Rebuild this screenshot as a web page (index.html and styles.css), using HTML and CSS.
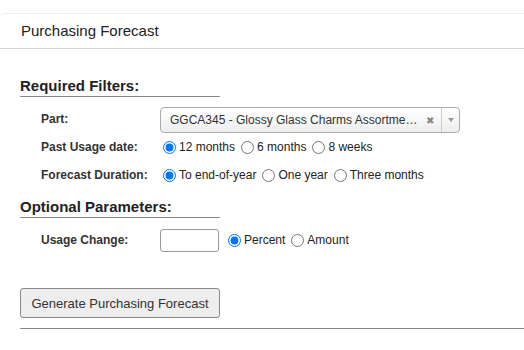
FILE: index.html
```html
<!DOCTYPE html>
<html lang="en">
<head>
    <meta charset="UTF-8">
    <meta name="viewport" content="width=device-width, initial-scale=1.0">
    <title>Purchasing Forecast</title>
    <link rel="stylesheet" href="styles.css">
</head>
<body>

    <div class="panel-head">Purchasing Forecast</div>

    <div class="panel-body">
        <h2 class="section-title">Required Filters:</h2>

        <div class="form-grid">
            <label class="field-label">Part:</label>
            <div class="field select-field">
                <div class="select-box">
                    <span class="select-text">GGCA345 - Glossy Glass Charms Assortme…</span>
                    <span class="select-clear">&#x2716;</span>
                    <span class="select-arrow"></span>
                </div>
            </div>

            <label class="field-label">Past Usage date:</label>
            <div class="field radios">
                <label><input type="radio" name="usage" checked>12 months</label>
                <label><input type="radio" name="usage">6 months</label>
                <label><input type="radio" name="usage">8 weeks</label>
            </div>

            <label class="field-label">Forecast Duration:</label>
            <div class="field radios">
                <label><input type="radio" name="duration" checked>To end-of-year</label>
                <label><input type="radio" name="duration">One year</label>
                <label><input type="radio" name="duration">Three months</label>
            </div>
        </div>

        <h2 class="section-title optional">Optional Parameters:</h2>

        <div class="form-grid">
            <label class="field-label">Usage Change:</label>
            <div class="field radios">
                <input type="text" class="small-input">
                <label><input type="radio" name="change" checked>Percent</label>
                <label><input type="radio" name="change">Amount</label>
            </div>
        </div>

        <button class="btn">Generate Purchasing Forecast</button>

        <hr class="divider">
    </div>

</body>
</html>
```

FILE: styles.css
```css
body {
    font-family: "Liberation Sans", Arial, sans-serif;
    margin: 0;
    background-color: #fff;
    color: #222;
}
.panel-head {
    margin-top: 13px;
    border-top: 1px solid #eee;
    border-bottom: 1px solid #d3d6db;
    border-top-left-radius: 4px;
    padding: 0 21px;
    height: 34px;
    line-height: 34px;
    font-size: 15px;
    color: #222;
}
.panel-body {
    padding-left: 20px;
}
.section-title {
    width: 200px;
    margin: 28px 0 0 0;
    padding-bottom: 1px;
    border-bottom: 1px solid #888;
    font-size: 15px;
    line-height: 18px;
    color: #222;
}
.section-title.optional {
    margin-top: 11px;
}
.form-grid {
    display: grid;
    grid-template-columns: 140px auto;
    row-gap: 4px;
    margin-top: 10px;
    align-items: start;
}
.field-label {
    padding-left: 21px;
    padding-top: 5px;
    font-size: 12px;
    font-weight: bold;
    color: #333;
}
.select-field {
    margin-bottom: -2px;
}
.select-box {
    position: relative;
    width: 298px;
    height: 24px;
    border: 1px solid #aaa;
    border-radius: 4px;
    background: linear-gradient(#fff, #eee);
    font-size: 12px;
    line-height: 24px;
}
.select-text {
    padding-left: 9px;
    color: #333;
}
.select-clear {
    position: absolute;
    right: 25px;
    top: 1px;
    font-size: 10px;
    color: #888;
}
.select-arrow {
    position: absolute;
    right: 0;
    top: 0;
    width: 17px;
    height: 24px;
    border-left: 1px solid #ccc;
}
.select-arrow::after {
    content: "";
    position: absolute;
    left: 6px;
    top: 10px;
    border-left: 3px solid transparent;
    border-right: 3px solid transparent;
    border-top: 4px solid #999;
}
.radios {
    display: flex;
    align-items: center;
    font-size: 12px;
    height: 24px;
    color: #222;
}
.radios label {
    display: flex;
    align-items: center;
    margin-right: 3px;
}
.radios input[type="radio"] {
    margin: 0 3px 0 3px;
    width: 13px;
    height: 13px;
}
.small-input {
    width: 57px;
    height: 21px;
    padding: 0;
    margin-right: 6px;
    border: 1px solid #999;
    border-radius: 3px;
}
.btn {
    display: block;
    margin-top: 36px;
    width: 200px;
    height: 30px;
    border: 1px solid #888;
    border-radius: 3px;
    background-color: #eee;
    font-family: "Liberation Sans", Arial, sans-serif;
    font-size: 13px;
    color: #333;
}
.divider {
    margin: 10px 0 0 0;
    border: none;
    border-top: 1px solid #888;
}
```
